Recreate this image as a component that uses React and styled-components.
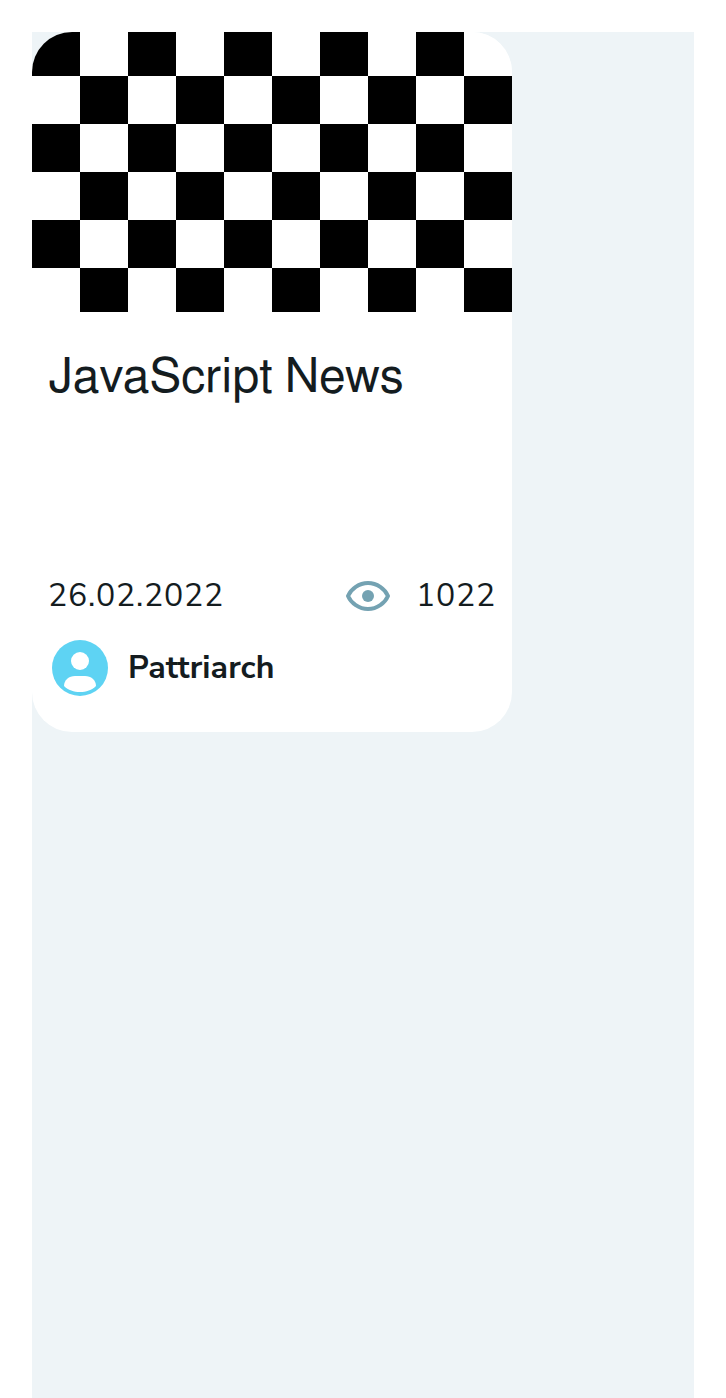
import React from "react";
import styled, { createGlobalStyle } from "styled-components";

const GlobalStyle = createGlobalStyle`
  * { box-sizing: border-box; }
  body { margin: 0; background: #fff; overflow: hidden; }
`;
const Page = styled.main`
  height: 1398px;
  padding: 32px 32px 0;
`;
const Surface = styled.section`
  height: 100%;
  background: #eef4f7;
`;
const Card = styled.article`
  display: flex;
  flex-direction: column;
  width: 480px;
  height: 700px;
  border-radius: 40px;
  overflow: hidden;
  background: #fff;
  color: #141c1f;
  font-family: "Nunito Sans", Nunito, "Noto Sans", sans-serif;
`;
const Cover = styled.div`
  height: 280px;
  flex: none;
  background: repeating-conic-gradient(#fff 0 25%, #000 0 50%) 0 -4px / 96px 96px;
`;
const Title = styled.h2`
  margin: 0;
  padding: 38px 16px 0;
  height: 248px;
  font: 400 48px/56px FreeSans, "Liberation Sans", Arial, sans-serif;
  font-kerning: none;
  white-space: nowrap;
`;
const Meta = styled.div`
  display: flex;
  align-items: center;
  justify-content: space-between;
  height: 72px;
  padding: 0 16px;
`;
const Text = styled.span`
  font-size: 32px;
  font-weight: ${(p) => (p.$bold ? 700 : 400)};
  letter-spacing: ${(p) => p.$spacing || 0}px;
  line-height: 44px;
`;
const Views = styled.div`
  display: flex;
  align-items: center;
  gap: 24px;
`;
const Author = styled.div`
  display: flex;
  align-items: center;
  gap: 20px;
  height: 72px;
  padding: 0 20px;
`;

export default function App() {
  return (
    <Page>
      <GlobalStyle />
      <Surface>
        <Card>
          <Cover />
          <Title>JavaScript News</Title>
          <Meta>
            <Text $spacing={0.78}>26.02.2022</Text>
            <Views>
              <svg width="48" height="48" viewBox="0 0 48 48" fill="none">
                <path d="M4 24C7 17 15 11 24 11s17 6 20 13c-3 7-11 13-20 13S7 31 4 24Z" stroke="#74a2b2" strokeWidth="4" strokeLinejoin="round" />
                <circle cx="24" cy="24" r="6" fill="#74a2b2" />
              </svg>
              <Text $spacing={0.78}>1022</Text>
            </Views>
          </Meta>
          <Author>
            <svg width="56" height="56" viewBox="0 0 56 56">
              <circle cx="28" cy="28" r="28" fill="#5ed3f3" />
              <circle cx="28" cy="21" r="9" fill="#fff" />
              <path d="M12 46c0-6 5-10 11-10h10c6 0 11 4 11 10-4 4-10 6-16 6s-12-2-16-6Z" fill="#fff" />
            </svg>
            <Text $bold $spacing={0.1}>Pattriarch</Text>
          </Author>
        </Card>
      </Surface>
    </Page>
  );
}
